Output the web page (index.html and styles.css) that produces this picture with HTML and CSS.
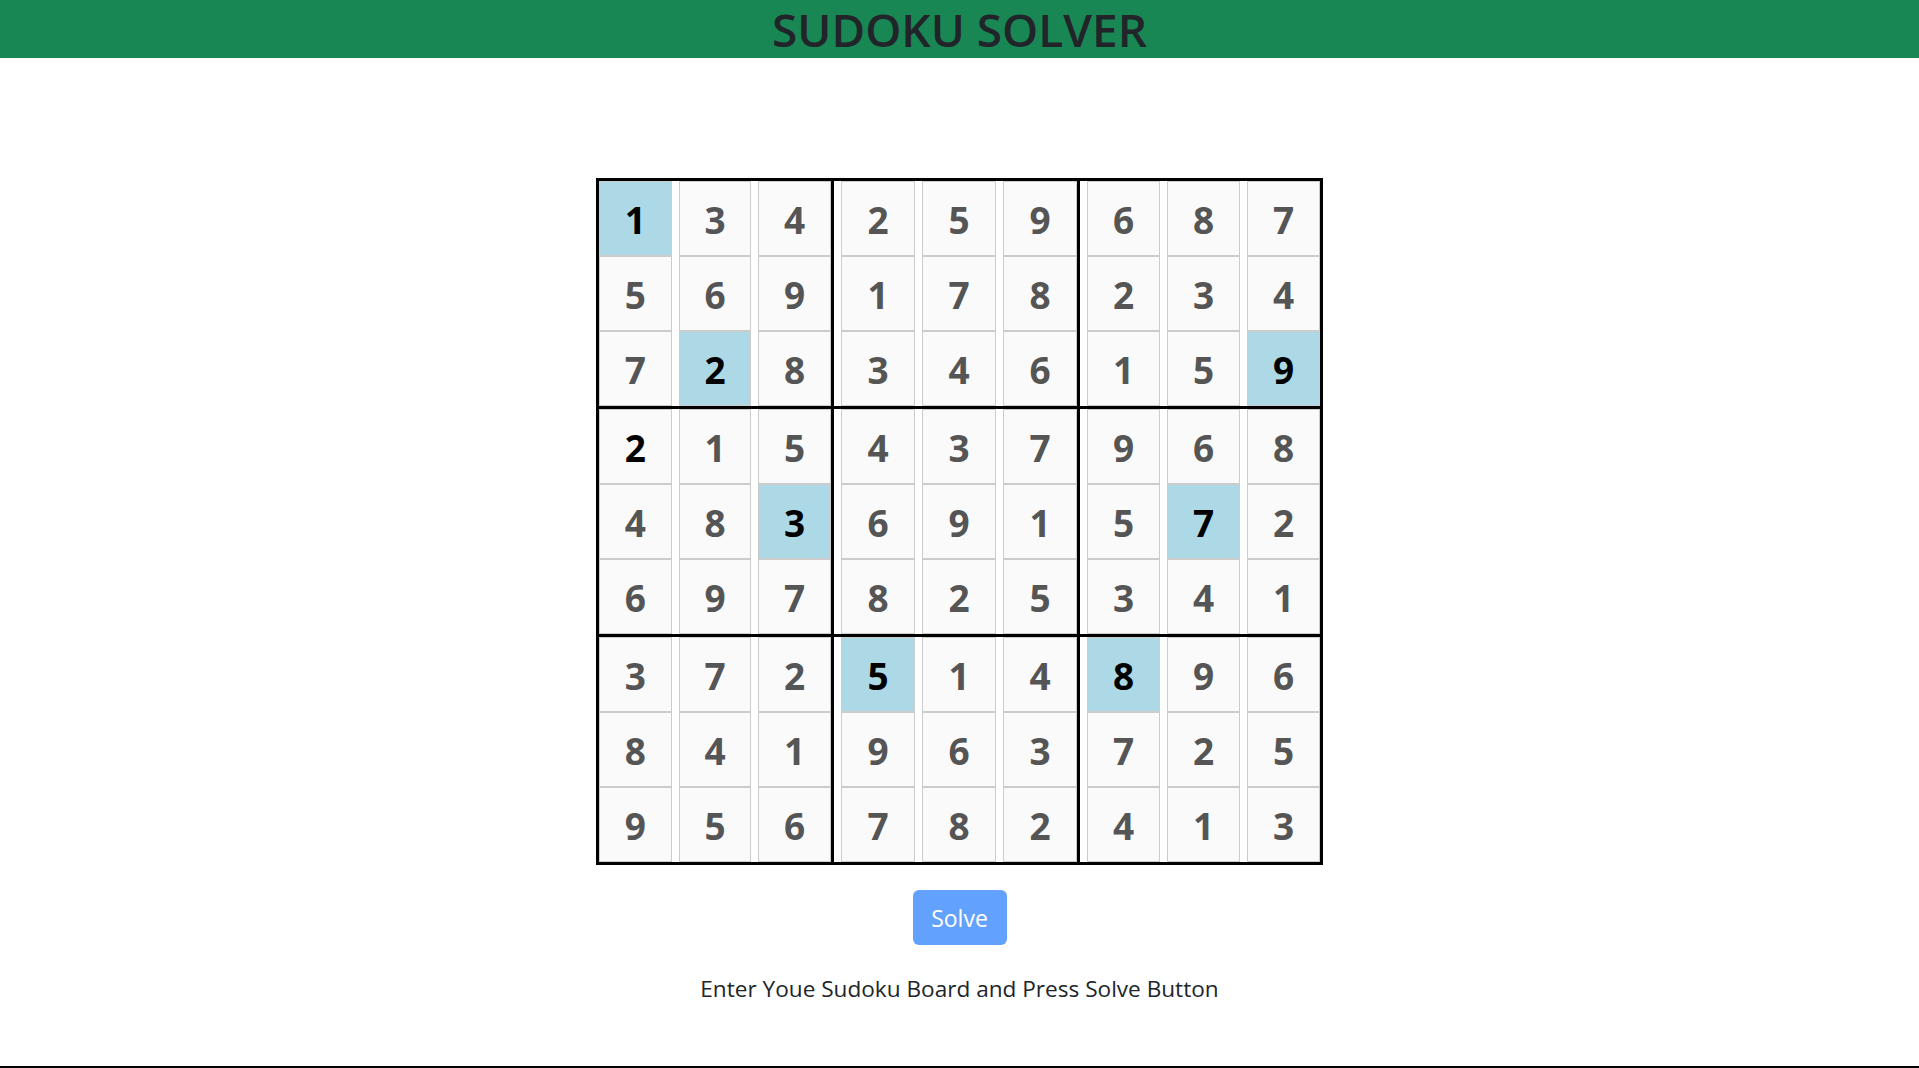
FILE: index.html
```html
<!DOCTYPE html>
<html lang="en">
<head>
<meta charset="utf-8">
<title>Sudoku Solver</title>
<link rel="stylesheet" href="styles.css">
</head>
<body>
<div class="page">
  <header class="topbar">
    <h1 class="title">SUDOKU SOLVER</h1>
  </header>
  <main class="main">
    <div class="board">
      <div class="band">
        <div class="row">
          <div class="seg"><div class="cell given">1</div><div class="cell">3</div><div class="cell">4</div></div>
          <div class="seg"><div class="cell">2</div><div class="cell">5</div><div class="cell">9</div></div>
          <div class="seg"><div class="cell">6</div><div class="cell">8</div><div class="cell">7</div></div>
        </div>
        <div class="row">
          <div class="seg"><div class="cell">5</div><div class="cell">6</div><div class="cell">9</div></div>
          <div class="seg"><div class="cell">1</div><div class="cell">7</div><div class="cell">8</div></div>
          <div class="seg"><div class="cell">2</div><div class="cell">3</div><div class="cell">4</div></div>
        </div>
        <div class="row">
          <div class="seg"><div class="cell">7</div><div class="cell given">2</div><div class="cell">8</div></div>
          <div class="seg"><div class="cell">3</div><div class="cell">4</div><div class="cell">6</div></div>
          <div class="seg"><div class="cell">1</div><div class="cell">5</div><div class="cell given">9</div></div>
        </div>
      </div>
      <div class="band">
        <div class="row">
          <div class="seg"><div class="cell active">2</div><div class="cell">1</div><div class="cell">5</div></div>
          <div class="seg"><div class="cell">4</div><div class="cell">3</div><div class="cell">7</div></div>
          <div class="seg"><div class="cell">9</div><div class="cell">6</div><div class="cell">8</div></div>
        </div>
        <div class="row">
          <div class="seg"><div class="cell">4</div><div class="cell">8</div><div class="cell given">3</div></div>
          <div class="seg"><div class="cell">6</div><div class="cell">9</div><div class="cell">1</div></div>
          <div class="seg"><div class="cell">5</div><div class="cell given">7</div><div class="cell">2</div></div>
        </div>
        <div class="row">
          <div class="seg"><div class="cell">6</div><div class="cell">9</div><div class="cell">7</div></div>
          <div class="seg"><div class="cell">8</div><div class="cell">2</div><div class="cell">5</div></div>
          <div class="seg"><div class="cell">3</div><div class="cell">4</div><div class="cell">1</div></div>
        </div>
      </div>
      <div class="band">
        <div class="row">
          <div class="seg"><div class="cell">3</div><div class="cell">7</div><div class="cell">2</div></div>
          <div class="seg"><div class="cell given">5</div><div class="cell">1</div><div class="cell">4</div></div>
          <div class="seg"><div class="cell given">8</div><div class="cell">9</div><div class="cell">6</div></div>
        </div>
        <div class="row">
          <div class="seg"><div class="cell">8</div><div class="cell">4</div><div class="cell">1</div></div>
          <div class="seg"><div class="cell">9</div><div class="cell">6</div><div class="cell">3</div></div>
          <div class="seg"><div class="cell">7</div><div class="cell">2</div><div class="cell">5</div></div>
        </div>
        <div class="row">
          <div class="seg"><div class="cell">9</div><div class="cell">5</div><div class="cell">6</div></div>
          <div class="seg"><div class="cell">7</div><div class="cell">8</div><div class="cell">2</div></div>
          <div class="seg"><div class="cell">4</div><div class="cell">1</div><div class="cell">3</div></div>
        </div>
      </div>
    </div>
    <button class="solve-btn" type="button">Solve</button>
    <p class="hint">Enter Youe Sudoku Board and Press Solve Button</p>
  </main>
  <div class="bottom-rule"></div>
</div>
</body>
</html>
```

FILE: styles.css
```css
* {
  box-sizing: border-box;
}

html, body {
  margin: 0;
  padding: 0;
}

body {
  font-family: "Open Sans", "Noto Sans", "DejaVu Sans", sans-serif;
  color: #212529;
  background: #ffffff;
}

.page {
  min-height: 100vh;
  display: flex;
  flex-direction: column;
}

.topbar {
  background: #198754;
  height: 58px;
  display: flex;
  justify-content: center;
}

.title {
  margin: 0;
  font-size: 46px;
  font-weight: 600;
  line-height: 58px;
  color: #212529;
  white-space: nowrap;
}

.main {
  flex: 1;
  display: flex;
  flex-direction: column;
  align-items: center;
  padding-top: 120px;
}

.board {
  width: 727px;
  border: 3px solid #000;
  display: flex;
  flex-direction: column;
}

.band {
  display: flex;
  flex-direction: column;
  border-bottom: 3px solid #000;
}

.band:last-child {
  border-bottom: none;
}

.row {
  display: flex;
  height: 75px;
}

.seg {
  display: flex;
  gap: 7px;
  border-right: 3px solid #000;
}

.seg:nth-child(1) {
  width: 235px;
}

.seg:nth-child(2) {
  width: 246px;
  padding-left: 7px;
}

.seg:nth-child(3) {
  width: 240px;
  padding-left: 7px;
  border-right: none;
}

.cell {
  flex: 1 1 0;
  min-width: 0;
  height: 100%;
  border: 1px solid #cccccc;
  background: #fafafa;
  display: flex;
  align-items: center;
  justify-content: center;
  padding-top: 2px;
  font-size: 37px;
  font-weight: 700;
  color: #555555;
}

.cell.given {
  background: #add8e6;
  color: #000;
}

.cell.active {
  color: #000;
}

.solve-btn {
  margin-top: 25px;
  width: 94px;
  height: 55px;
  border: none;
  border-radius: 6px;
  background: #62a1fe;
  color: #ffffff;
  font-family: "Open Sans", "Noto Sans", sans-serif;
  font-size: 23px;
  padding: 0;
}

.hint {
  margin: 27px 0 0;
  font-size: 22.6px;
  line-height: 1.5;
  color: #212529;
}

.bottom-rule {
  height: 2px;
  background: #000;
}
```
